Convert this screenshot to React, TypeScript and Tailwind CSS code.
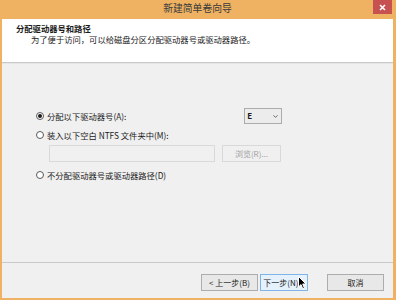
import { ChevronDown } from "lucide-react";

const font = { fontFamily: '"Noto Sans CJK SC", "Noto Sans", sans-serif' };

function Radio({ checked, label }: { checked?: boolean; label: string }) {
  return (
    <div className="flex items-center gap-[3px] h-[12px]">
      <span className="w-[8px] h-[8px] rounded-full border border-[#5a5a5a] bg-white flex items-center justify-center">
        {checked && <span className="w-[4px] h-[4px] rounded-full bg-[#1a1a1a]" />}
      </span>
      <span className="text-[8.3px] text-[#1a1a1a] leading-none">{label}</span>
    </div>
  );
}

function Button({ label, hover, disabled }: { label: string; hover?: boolean; disabled?: boolean }) {
  return (
    <div
      className={
        "h-[17px] flex items-center justify-center text-[8px] leading-none border " +
        (hover
          ? "border-[#7eb4ea] bg-[#e5f1fb] text-[#1a1a1a]"
          : disabled
          ? "border-[#d9d9d9] bg-[#f0f0f0] text-[#a0a0a0]"
          : "border-[#adadad] bg-[#e8e8e8] text-[#1a1a1a]")
      }
    >
      {label}
    </div>
  );
}

export default function App() {
  return (
    <div className="w-[396px] h-[300px] bg-[#efb262] pl-[2px] pr-[3px] pb-[2px] flex flex-col overflow-hidden relative" style={font}>
      {/* Title bar */}
      <div className="h-[19px] shrink-0 relative flex items-center justify-center">
        <span className="text-[9.8px] text-[#3a3a3a] leading-none -mt-[2px]">新建简单卷向导</span>
        <div className="absolute right-[1px] top-0 w-[19px] h-[14px] bg-[#c75050] flex items-center justify-center">
          <svg width="7" height="7" viewBox="0 0 7 7">
            <path d="M1 1 L6 6 M6 1 L1 6" stroke="#fff" strokeWidth="1.6" />
          </svg>
        </div>
      </div>

      {/* Header */}
      <div className="h-[44px] shrink-0 bg-white border-b border-[#c9c9c9] pl-[14px] pt-[4px]">
        <div className="text-[8.3px] font-bold text-[#1a1a1a] leading-[11px]">分配驱动器号和路径</div>
        <div className="text-[8.3px] text-[#1a1a1a] leading-[11px] pl-[15px]">为了便于访问，可以给磁盘分区分配驱动器号或驱动器路径。</div>
      </div>

      {/* Body */}
      <div className="flex-1 bg-[#f0f0f0] border-t border-[#e6e6e6] pl-[34px] pt-[44px] flex flex-col">
        <div className="flex items-center">
          <Radio checked label="分配以下驱动器号(A):" />
          <div className="ml-[118px] w-[38px] h-[16px] border border-[#acacac] bg-[#ececec] flex items-center justify-between px-[2px]">
            <span className="text-[8px] leading-none text-[#1a1a1a] font-bold">E</span>
            <ChevronDown size={7} strokeWidth={3} color="#555" />
          </div>
        </div>
        <div className="mt-[5px]">
          <Radio label="装入以下空白 NTFS 文件夹中(M):" />
        </div>
        <div className="flex mt-[4px] ml-[13px] gap-[7px]">
          <div className="w-[166px] h-[17px] border border-[#d9d9d9] bg-[#f0f0f0]" />
          <div className="w-[59px]">
            <Button label="浏览(R)..." disabled />
          </div>
        </div>
        <div className="mt-[7px]">
          <Radio label="不分配驱动器号或驱动器路径(D)" />
        </div>
      </div>

      {/* Footer */}
      <div className="h-[36px] shrink-0 bg-[#f0f0f0] border-t border-[#c9c9c9] flex items-start pt-[11px] pl-[199px] gap-[2px]">
        <div className="w-[57px]">
          <Button label="< 上一步(B)" />
        </div>
        <div className="w-[48px]">
          <Button label="下一步(N) >" hover />
        </div>
        <div className="w-[57px] ml-[17px]">
          <Button label="取消" />
        </div>
      </div>

      {/* Mouse cursor */}
      <svg className="absolute left-[298px] top-[276px]" width="9" height="14" viewBox="0 0 9 14">
        <path d="M0.5 0.5 L0.5 11 L3 8.6 L4.8 12.8 L6.4 12.1 L4.7 8 L8 8 Z" fill="#000" stroke="#fff" strokeWidth="1" />
      </svg>
    </div>
  );
}
